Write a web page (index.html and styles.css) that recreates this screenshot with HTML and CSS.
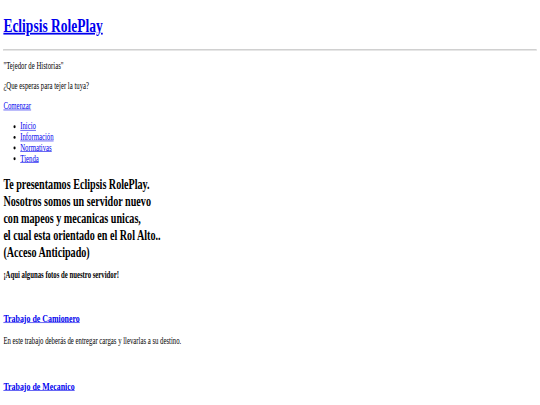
FILE: index.html
```html
<!DOCTYPE html>
<html lang="es">
<head>
<meta charset="utf-8">
<title>Eclipsis RolePlay</title>
<link rel="stylesheet" href="styles.css">
</head>
<body>
<div class="screen">
  <div class="page">
    <h1 class="title"><a href="#">Eclipsis RolePlay</a></h1>
    <hr class="rule">
    <p class="text">"Tejedor de Historias"</p>
    <p class="text">¿Que esperas para tejer la tuya?</p>
    <p class="text"><a href="#">Comenzar</a></p>
    <ul class="menu">
      <li><a href="#">Inicio</a></li>
      <li><a href="#">Información</a></li>
      <li><a href="#">Normativas</a></li>
      <li><a href="#">Tienda</a></li>
    </ul>
    <h2 class="intro">Te presentamos Eclipsis RolePlay.<br>Nosotros somos un servidor nuevo<br>con mapeos y mecanicas unicas,<br>el cual esta orientado en el Rol Alto..<br>(Acceso Anticipado)</h2>
    <h4 class="fotos">¡Aqui algunas fotos de nuestro servidor!</h4>
    <div class="gap gap-first"></div>
    <h3 class="job"><a href="#">Trabajo de Camionero</a></h3>
    <p class="text">En este trabajo deberás de entregar cargas y llevarlas a su destino.</p>
    <div class="gap"></div>
    <h3 class="job"><a href="#">Trabajo de Mecanico</a></h3>
    <p class="text">En este trabajo deberás de reparar vehiculos y llevarlos a su destino.</p>
  </div>
</div>
</body>
</html>
```

FILE: styles.css
```css
html, body {
  margin: 0;
  padding: 0;
  overflow: hidden;
  background: #ffffff;
}

.screen {
  width: 540px;
  height: 405px;
  overflow: hidden;
  background: #ffffff;
}

.page {
  width: 1280px;
  box-sizing: border-box;
  padding: 3px 8px 8px;
  font-family: "Liberation Serif", "Times New Roman", serif;
  font-size: 16px;
  color: #000000;
  transform: scale(0.421875, 0.596);
  transform-origin: 0 0;
}

.page a {
  color: #0000ee;
  text-decoration: underline;
}

.title {
  font-size: 32px;
  margin: 21.44px 0;
}

.rule {
  margin: 8px 0 7px;
  border-style: solid;
  border-width: 1px;
  border-color: #a8a8a8 #d8d8d8 #d8d8d8 #a8a8a8;
}

.text {
  margin: 16px 0;
}

.menu {
  margin: 16px 0;
  padding-left: 40px;
}

.intro {
  font-size: 24px;
  line-height: 28.4px;
  margin: 20px 0 16px;
}

.fotos {
  font-size: 16px;
  margin: 16px 0;
}

.gap {
  height: 21px;
}

.gap-first {
  height: 17px;
}

.job {
  font-size: 18.72px;
  margin: 18.72px 0;
}
```
